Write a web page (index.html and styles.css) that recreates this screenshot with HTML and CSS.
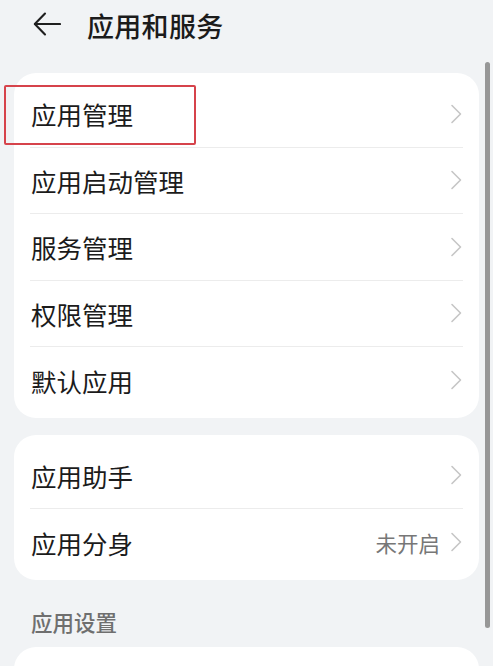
FILE: index.html
```html
<!DOCTYPE html>
<html lang="zh-CN">
<head>
<meta charset="utf-8">
<title>应用和服务</title>
<link rel="stylesheet" href="styles.css">
</head>
<body>
<div class="page">
  <header class="topbar">
    <svg class="back" width="28" height="24" viewBox="0 0 28 24" fill="none" stroke="#1f1f1f" stroke-width="2.1" stroke-linecap="round" stroke-linejoin="round">
      <path d="M12 1.5 L1.8 12 L12 22.5"/>
      <path d="M2 12 H27"/>
    </svg>
    <h1 class="title">应用和服务</h1>
  </header>

  <main class="content">
    <section class="card">
      <div class="row">
        <span class="label">应用管理</span>
        <svg class="chev" width="12" height="20" viewBox="0 0 12 20" fill="none" stroke="#c6c6c6" stroke-width="1.6" stroke-linecap="round" stroke-linejoin="round"><path d="M2 1.5 L10.5 10 L2 18.5"/></svg>
        <span class="highlight"></span>
      </div>
      <div class="row"><span class="label">应用启动管理</span><svg class="chev" width="12" height="20" viewBox="0 0 12 20" fill="none" stroke="#c6c6c6" stroke-width="1.6" stroke-linecap="round" stroke-linejoin="round"><path d="M2 1.5 L10.5 10 L2 18.5"/></svg></div>
      <div class="row"><span class="label">服务管理</span><svg class="chev" width="12" height="20" viewBox="0 0 12 20" fill="none" stroke="#c6c6c6" stroke-width="1.6" stroke-linecap="round" stroke-linejoin="round"><path d="M2 1.5 L10.5 10 L2 18.5"/></svg></div>
      <div class="row"><span class="label">权限管理</span><svg class="chev" width="12" height="20" viewBox="0 0 12 20" fill="none" stroke="#c6c6c6" stroke-width="1.6" stroke-linecap="round" stroke-linejoin="round"><path d="M2 1.5 L10.5 10 L2 18.5"/></svg></div>
      <div class="row last"><span class="label">默认应用</span><svg class="chev" width="12" height="20" viewBox="0 0 12 20" fill="none" stroke="#c6c6c6" stroke-width="1.6" stroke-linecap="round" stroke-linejoin="round"><path d="M2 1.5 L10.5 10 L2 18.5"/></svg></div>
    </section>

    <section class="card">
      <div class="row"><span class="label">应用助手</span><svg class="chev" width="12" height="20" viewBox="0 0 12 20" fill="none" stroke="#c6c6c6" stroke-width="1.6" stroke-linecap="round" stroke-linejoin="round"><path d="M2 1.5 L10.5 10 L2 18.5"/></svg></div>
      <div class="row last"><span class="label">应用分身</span><span class="value">未开启</span><svg class="chev" width="12" height="20" viewBox="0 0 12 20" fill="none" stroke="#c6c6c6" stroke-width="1.6" stroke-linecap="round" stroke-linejoin="round"><path d="M2 1.5 L10.5 10 L2 18.5"/></svg></div>
    </section>

    <div class="section-title">应用设置</div>
    <section class="card card-partial"></section>
  </main>

  <div class="scrollbar"></div>
</div>
</body>
</html>
```

FILE: styles.css
```css
* { box-sizing: border-box; }
html, body {
  margin: 0;
  padding: 0;
  background: #f1f3f5;
}
body {
  font-family: "Noto Sans CJK SC", "Noto Sans", sans-serif;
  color: #1b1b1b;
  width: 493px;
  height: 666px;
  overflow: hidden;
}
.page {
  position: relative;
  height: 666px;
  overflow: hidden;
}
.topbar {
  height: 50px;
  display: flex;
  align-items: center;
  padding-left: 33px;
}
.back {
  display: block;
  margin-top: -2px;
}
.title {
  margin: 0 0 0 26px;
  font-size: 27px;
  font-weight: 500;
  line-height: 1;
  letter-spacing: 0.3px;
  color: #1b1b1b;
}
.content {
  padding: 23px 14px 0;
  display: flex;
  flex-direction: column;
}
.card {
  background: #ffffff;
  border-radius: 22px;
  padding: 8px 16px 4px;
  margin-bottom: 17px;
}
.row {
  position: relative;
  height: 66.5px;
  display: flex;
  align-items: center;
  border-bottom: 1px solid #ececec;
}
.row.last { border-bottom: none; }
.label {
  flex: 1;
  font-size: 25.5px;
  line-height: 1;
  padding-left: 1px;
  color: #1b1b1b;
}
.value {
  font-size: 21.5px;
  color: #777;
  margin-right: 10px;
  line-height: 1;
}
.chev {
  display: block;
  flex: none;
  margin-right: 1px;
}
.highlight {
  position: absolute;
  left: -26px;
  top: 4px;
  width: 192px;
  height: 60px;
  border: 2.2px solid #d6434b;
  border-radius: 2px;
}
.section-title {
  height: 50px;
  display: flex;
  align-items: flex-end;
  padding: 0 0 14px 17px;
  font-size: 21.5px;
  font-weight: 500;
  color: #6f6f6f;
  line-height: 1;
}
.card-partial {
  height: 80px;
}
.scrollbar {
  position: absolute;
  left: 485px;
  top: 62px;
  width: 5px;
  height: 566px;
  border-radius: 3px;
  background: #979797;
}
```
